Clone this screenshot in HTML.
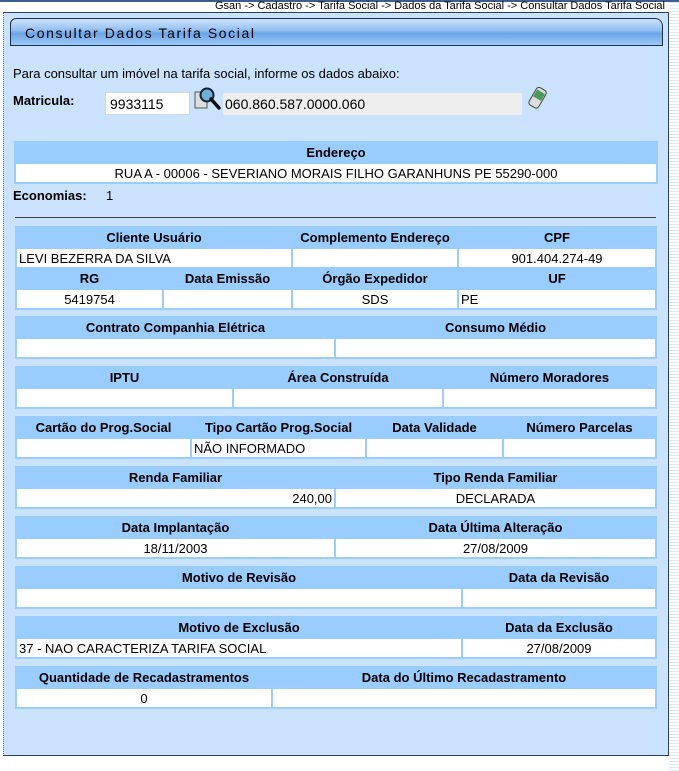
<!DOCTYPE html>
<html><head><meta charset="utf-8"><style>
*{margin:0;padding:0;box-sizing:border-box}
body{width:679px;height:771px;background:#fff;font-family:"Liberation Sans",Arial,sans-serif;font-size:13px;color:#000;position:relative;overflow:hidden}
.stripes{position:absolute;left:669px;top:0;width:10px;height:771px;background:repeating-linear-gradient(#fff 0 2px,#dce9f7 2px 3px)}
.topline{position:absolute;left:0;top:0;width:679px;height:2px;background:#3a5f8f}
.crumb{position:absolute;right:14px;top:0;font-size:11px;line-height:12px;color:#000}
.panel{position:absolute;left:3px;top:12px;width:666px;height:744px;background:#cae2fc;border:1px solid #2a4060;border-left:1px dotted #5a7090}
.title{position:absolute;left:10px;top:18px;width:653px;height:28px;border:1px solid #1a3050;border-radius:6px 8px 0 0;background:linear-gradient(#cfe3fb,#8fbdf0 45%,#6aa5e8 55%,#9cc8f5);font-size:14px;letter-spacing:1.6px;padding:6px 0 0 14px;color:#000}
.abs{position:absolute}
table{position:absolute;left:15px;width:642px;background:#99ccff;border-collapse:separate;border-spacing:2px;table-layout:fixed}
th{height:19px;font-weight:bold;font-size:13px;text-align:center;padding:0}
td{height:18px;background:#fff;font-size:13px;padding:0 2px;white-space:nowrap}
.c{text-align:center}.r{text-align:right}
</style></head><body>
<div class="stripes"></div><div class="topline"></div>
<div class="panel"></div>
<div class="crumb">Gsan -&gt; Cadastro -&gt; Tarifa Social -&gt; Dados da Tarifa Social -&gt; Consultar Dados Tarifa Social</div>
<div class="title">Consultar Dados Tarifa Social</div>
<div class="abs" style="left:13px;top:66px">Para consultar um imóvel na tarifa social, informe os dados abaixo:</div>
<div class="abs" style="left:13px;top:93px;font-weight:bold">Matricula:</div>
<div class="abs" style="left:105px;top:92px;width:85px;height:23px;background:#fff;border:1px solid #c8d8e8;padding:3px 0 0 4px;font-size:14px">9933115</div>
<svg class="abs" style="left:194px;top:86px" width="28" height="26" viewBox="0 0 28 26"><rect x="1" y="6" width="12" height="16" fill="#ddd" stroke="#555"/><circle cx="13" cy="9" r="6.5" fill="#6fb0d8" stroke="#123" stroke-width="2"/><path d="M17 13 L25 22" stroke="#111" stroke-width="3.5" stroke-linecap="round"/></svg>
<div class="abs" style="left:223px;top:93px;width:299px;height:22px;background:#eeeeee;padding:3px 0 0 2px;font-size:14px">060.860.587.0000.060</div>
<svg class="abs" style="left:527px;top:86px" width="22" height="24" viewBox="0 0 22 24"><g transform="rotate(30 11 12)"><rect x="5" y="2" width="11" height="20" rx="3" fill="#ddd" stroke="#444"/><rect x="6" y="5" width="9" height="8" fill="#4a9a5a"/></g></svg>

<table style="top:141px;width:644px;left:14px"><tr><th>Endereço</th></tr><tr><td class="c">RUA A - 00006 - SEVERIANO MORAIS FILHO GARANHUNS PE 55290-000</td></tr></table>
<div class="abs" style="left:13px;top:188px;font-weight:bold">Economias:</div>
<div class="abs" style="left:106px;top:188px">1</div>
<div class="abs" style="left:15px;top:217px;width:641px;height:1px;background:#444"></div>

<table style="top:226px"><colgroup><col style="width:145px"><col style="width:127px"><col style="width:164px"><col></colgroup>
<tr><th colspan="2">Cliente Usuário</th><th>Complemento Endereço</th><th>CPF</th></tr>
<tr><td colspan="2">LEVI BEZERRA DA SILVA</td><td></td><td class="c">901.404.274-49</td></tr>
<tr><th>RG</th><th>Data Emissão</th><th>Órgão Expedidor</th><th>UF</th></tr>
<tr><td class="c">5419754</td><td></td><td class="c">SDS</td><td>PE</td></tr></table>

<table style="top:316px"><colgroup><col style="width:317px"><col></colgroup><tr><th>Contrato Companhia Elétrica</th><th>Consumo Médio</th></tr><tr><td></td><td></td></tr></table>
<table style="top:366px"><colgroup><col style="width:215px"><col style="width:208px"><col></colgroup><tr><th>IPTU</th><th>Área Construída</th><th>Número Moradores</th></tr><tr><td></td><td></td><td></td></tr></table>
<table style="top:416px"><colgroup><col style="width:173px"><col style="width:173px"><col style="width:135px"><col></colgroup><tr><th>Cartão do Prog.Social</th><th>Tipo Cartão Prog.Social</th><th>Data Validade</th><th>Número Parcelas</th></tr><tr><td></td><td>NÃO INFORMADO</td><td></td><td></td></tr></table>
<table style="top:466px"><colgroup><col style="width:317px"><col></colgroup><tr><th>Renda Familiar</th><th>Tipo Renda Familiar</th></tr><tr><td class="r">240,00</td><td class="c">DECLARADA</td></tr></table>
<table style="top:516px"><colgroup><col style="width:317px"><col></colgroup><tr><th>Data Implantação</th><th>Data Última Alteração</th></tr><tr><td class="c">18/11/2003</td><td class="c">27/08/2009</td></tr></table>
<table style="top:566px"><colgroup><col style="width:444px"><col></colgroup><tr><th>Motivo de Revisão</th><th>Data da Revisão</th></tr><tr><td></td><td></td></tr></table>
<table style="top:616px"><colgroup><col style="width:444px"><col></colgroup><tr><th>Motivo de Exclusão</th><th>Data da Exclusão</th></tr><tr><td>37 - NAO CARACTERIZA TARIFA SOCIAL</td><td class="c">27/08/2009</td></tr></table>
<table style="top:666px"><colgroup><col style="width:254px"><col></colgroup><tr><th>Quantidade de Recadastramentos</th><th>Data do Último Recadastramento</th></tr><tr><td class="c">0</td><td></td></tr></table>
</body></html>
